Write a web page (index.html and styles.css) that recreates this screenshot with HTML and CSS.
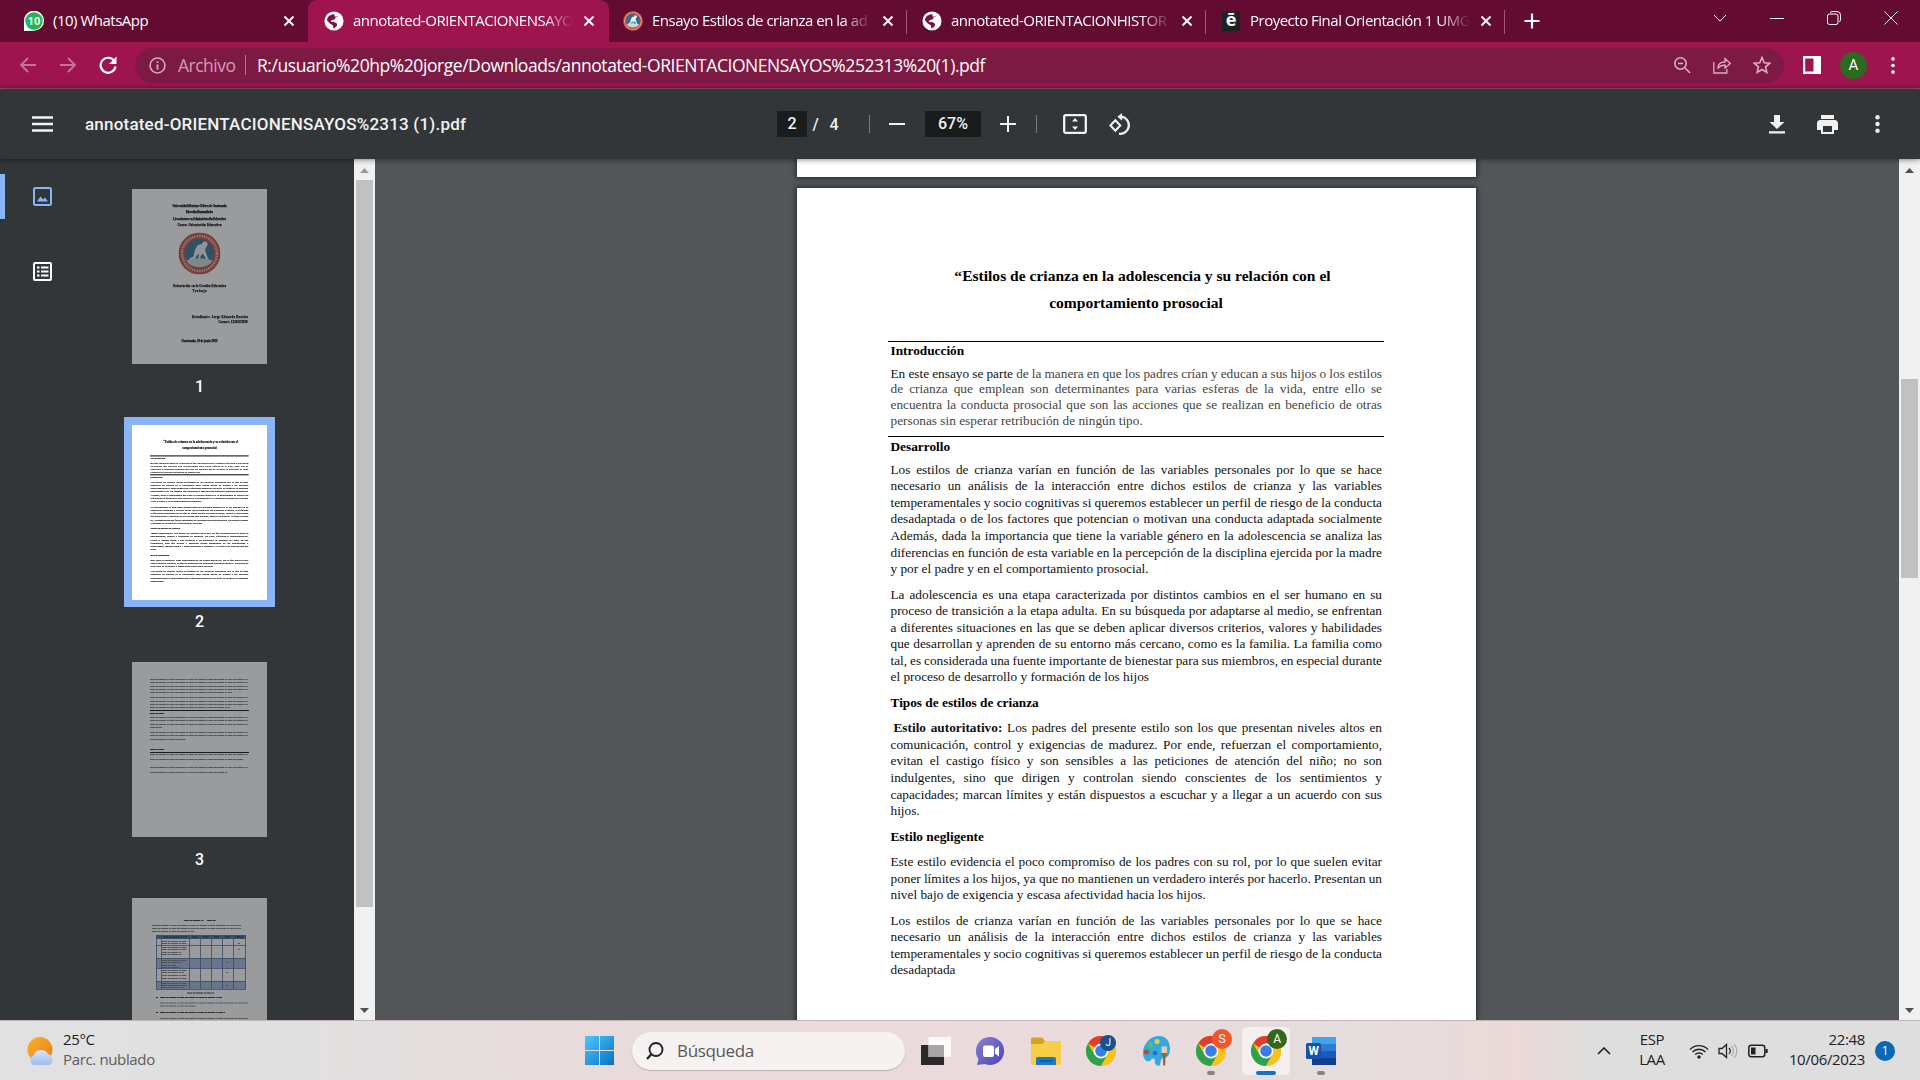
FILE: index.html
```html
<!DOCTYPE html>
<html lang="es">
	<head>
		<meta charset="utf-8">
		<title>annotated-ORIENTACIONENSAYOS%2313 (1).pdf</title>
		<link rel="stylesheet" href="styles.css">
	</head>
	<body>
		<!-- shared symbols -->
		<svg class="defs" width="0" height="0">
			<symbol id="close" viewBox="0 0 12 12"><path d="M1.5 1.5l9 9M10.5 1.5l-9 9" stroke="#fff" stroke-width="1.9"/></symbol>
			<symbol id="globe" viewBox="0 0 24 24"><circle cx="12" cy="12" r="11.5" fill="#fff"/><path d="M11 4c3-1 5 0 6 2l-3 1.500-1 2.500-4 1-1 2 5 .5 3 2-1 3-3.500 2.500c-1-1 0-3-1-4L7 15l-3.500-4C4 8 5 6 7.500 5z" fill="#7d1040"/><path d="M12 3c4 0 5 2 5 3l-4 1z" fill="#fff"/></symbol>
			<symbol id="seal" viewBox="0 0 42 42"><circle cx="21" cy="21" r="21" fill="#c6453c"/><circle cx="21" cy="21" r="17.500" fill="none" stroke="#e8c9b8" stroke-width="2.500" stroke-dasharray="1.300 1.100"/><circle cx="21" cy="21" r="14.500" fill="#2a6c96"/><path d="M8 28c8-3 18-3 26 0-4 9-22 9-26 0z" fill="#cfd5d8"/><path d="M23.500 11.500a2.800 2.800 0 1 1 4.500 2.500l-1.500 3 1.500 5 2 5h-2l-3-5-2 0-2 5-1-.5.5-5-2 1-1.500 3.500-6 1.500v-1.500l4-2 1.500-7 3-4.500z" fill="#eef2f3"/></symbol>
			<symbol id="chrome" viewBox="0 0 30 30"><circle cx="15" cy="15" r="15" fill="#fbc116"/><path d="M15 15L2 7.500A15 15 0 0 1 28 7.500H15z" fill="#e33b2e"/><path d="M2 7.500A15 15 0 0 0 15 30l6.500-11.300L15 15 8.500 18.700z" fill="#2da14b"/><path d="M28 7.500H15l6.500 11.200L15 30A15 15 0 0 0 28 7.500z" fill="#fbc116"/><circle cx="15" cy="15" r="7.400" fill="#fff"/><circle cx="15" cy="15" r="5.800" fill="#3b7de8"/></symbol>
		</svg>

		<div class="tabs">
			<div class="tab">
				<svg class="fav" viewBox="0 0 20 20"><path d="M0 20V10a10 10 0 1 1 10 9.700z" fill="#fff"/><circle cx="10" cy="10" r="8.700" fill="#1fb855"/><text x="10" y="14" class="fav-num">10</text></svg>
				<span class="tab-name">(10) WhatsApp</span>
				<svg class="x"><use href="#close"/></svg>
			</div>
			<div class="tab active">
				<svg class="fav"><use href="#globe"/></svg>
				<span class="tab-name fade">annotated-ORIENTACIONENSAYO</span>
				<svg class="x"><use href="#close"/></svg>
			</div>
			<div class="tab">
				<svg class="fav"><use href="#seal"/></svg>
				<span class="tab-name fade">Ensayo Estilos de crianza en la ad</span>
				<svg class="x"><use href="#close"/></svg>
			</div>
			<div class="tab line">
				<svg class="fav"><use href="#globe"/></svg>
				<span class="tab-name fade">annotated-ORIENTACIONHISTOR</span>
				<svg class="x"><use href="#close"/></svg>
			</div>
			<div class="tab line">
				<span class="fav e-icon">ē</span>
				<span class="tab-name fade">Proyecto Final Orientación 1 UMG</span>
				<svg class="x"><use href="#close"/></svg>
			</div>
			<div class="new-tab"><svg width="16" height="16" viewBox="0 0 16 16"><path d="M8 .5v15M.5 8h15" stroke="#fff" stroke-width="2.200"/></svg></div>
			<div class="win-btns">
				<svg viewBox="0 0 14 14"><path d="M1 4l6 6 6-6"/></svg>
				<svg viewBox="0 0 14 14"><path d="M0 7.500h14"/></svg>
				<svg viewBox="0 0 14 14"><rect x=".5" y="3" width="10.500" height="10.500" rx="2"/><path d="M3 1.500Q4 .5 6 .5h4q3.500 0 3.500 3.500v4q0 2-1 3"/></svg>
				<svg viewBox="0 0 14 14"><path d="M.5 .5l13 13M13.500.5l-13 13"/></svg>
			</div>
		</div>

		<div class="nav">
			<div class="nav-btns">
				<svg viewBox="0 0 18 18"><path d="M17 9H2M9 2L2 9l7 7" fill="none" stroke="#c8729a" stroke-width="1.800"/></svg>
				<svg viewBox="0 0 18 18"><path d="M1 9h15M9 2l7 7-7 7" fill="none" stroke="#c8729a" stroke-width="1.800"/></svg>
				<svg viewBox="0 0 18 18"><path d="M15.300 5A7.500 7.500 0 1 0 16.500 10.500" fill="none" stroke="#fff" stroke-width="2.200"/><path d="M17.500.5v7.500H10z" fill="#fff"/></svg>
			</div>
			<div class="omnibox">
				<svg class="info" viewBox="0 0 16 16"><circle cx="8" cy="8" r="7" fill="none" stroke="#d8a9bd" stroke-width="1.500"/><path d="M8 7v5M8 4v1.700" stroke="#d8a9bd" stroke-width="1.700"/></svg>
				<span class="scheme">Archivo</span>
				<span class="url">R:/usuario%20hp%20jorge/Downloads/annotated-ORIENTACIONENSAYOS%252313%20(1).pdf</span>
				<div class="omni-icons">
					<svg viewBox="0 0 18 18"><circle cx="7.500" cy="7.500" r="5.700"/><path d="M12 12l5 5M5 7.500h5"/></svg>
					<svg viewBox="0 0 18 18"><path d="M.8 6v11h13v-4M5 12c0-4 3-6 7-6V2.500L17.300 7.500 12 12V9c-3 0-5 1-7 3z" stroke-width="1.300"/></svg>
					<svg viewBox="0 0 18 18"><path d="M9 1.500l2.200 5.200 5.600.5-4.200 3.700 1.200 5.500L9 13.500l-4.800 2.900 1.200-5.500L1.200 7.200l5.600-.5z"/></svg>
				</div>
			</div>
			<svg class="panel" viewBox="0 0 18 18"><path d="M0 0h18v18H0zM2.200 2.500v13h8.300v-13z" fill="#fff" fill-rule="evenodd"/></svg>
			<span class="avatar">A</span>
			<svg class="dots" viewBox="0 0 4 18"><g fill="#fff"><circle cx="2" cy="2" r="1.900"/><circle cx="2" cy="9" r="1.900"/><circle cx="2" cy="16" r="1.900"/></g></svg>
		</div>

		<div class="pdf-bar">
			<svg class="burger" viewBox="0 0 21 16"><path d="M0 1.500h21M0 8h21M0 14.500h21" stroke="#f1f1f1" stroke-width="2.500"/></svg>
			<span class="pdf-name">annotated-ORIENTACIONENSAYOS%2313 (1).pdf</span>
			<div class="pdf-mid">
				<span class="page-in">2</span>
				<span class="slash">/</span>
				<span class="total">4</span>
				<i class="sep"></i>
				<svg class="minus" viewBox="0 0 16 16"><path d="M0 8h16" stroke="#f1f1f1" stroke-width="2"/></svg>
				<span class="zoom">67%</span>
				<svg class="plus" viewBox="0 0 16 16"><path d="M0 8h16M8 0v16" stroke="#f1f1f1" stroke-width="2"/></svg>
				<i class="sep"></i>
				<svg class="fit" viewBox="0 0 24 20"><rect x="1.200" y="1.200" width="21.600" height="17.600" rx="1.500" fill="none" stroke="#f1f1f1" stroke-width="2.300"/><path d="M12 4l3 3.500H9zM12 16l3-3.500H9z" fill="#f1f1f1"/></svg>
				<svg class="rot" viewBox="0 0 22 22"><path d="M7 7l4.700 5L7 17l-4.700-5z" fill="none" stroke="#f1f1f1" stroke-width="2"/><path d="M13 3.500a8 8 0 1 1-2.500 16.300" fill="none" stroke="#f1f1f1" stroke-width="2.200"/><path d="M13.500 0v7.500L9 3.700z" fill="#f1f1f1"/></svg>
			</div>
			<div class="pdf-right">
				<svg width="16" height="19" viewBox="0 0 16 19"><path d="M5 0h6v7h4.500L8 14 .5 7H5zM0 16.300h16v2.200H0z"/></svg>
				<svg width="21" height="19" viewBox="0 0 21 19"><path d="M4 0h13v4H4zM3.500 5h14A3.500 3.500 0 0 1 21 8.500V15h-4v4H4v-4H0V8.500A3.500 3.500 0 0 1 3.500 5zM6 11v6h9v-6z" fill-rule="evenodd"/></svg>
				<svg width="5" height="18" viewBox="0 0 5 18"><circle cx="2.500" cy="2.300" r="2.200"/><circle cx="2.500" cy="9" r="2.200"/><circle cx="2.500" cy="15.700" r="2.200"/></svg>
			</div>
		</div>

		<div class="body">
			<div class="side">
				<div class="side-icons">
					<div class="side-icon on"><svg viewBox="0 0 19 19"><rect x="1" y="1" width="17" height="17" rx="1.500" fill="none" stroke="#8ab4f8" stroke-width="2"/><path d="M4 14.500l3.500-5 2.500 3 2-2 3 4z" fill="#8ab4f8"/></svg></div>
					<div class="side-icon"><svg viewBox="0 0 19 19"><rect x="1" y="1" width="17" height="17" rx="1" fill="none" stroke="#fff" stroke-width="2"/><path d="M4 5.500h2.500M8 5.500h7.500M4 9.500h2.500M8 9.500h7.500M4 13.500h2.500M8 13.500h7.500" stroke="#fff" stroke-width="2"/></svg></div>
				</div>
				<div class="thumbs">
					<div class="thumb">
						<svg viewBox="0 0 135 175">
							<g class="mini">
								<text x="67.500" y="18" textLength="54">Universidad Mariano Gálvez de Guatemala</text>
								<text x="67.500" y="24" textLength="27">Dirección Humanidades</text>
								<text x="67.500" y="31" textLength="53">Licenciatura en Administración Educativa</text>
								<text x="67.500" y="37" textLength="44">Curso: Orientación Educativa</text>
								<text x="67.500" y="98" textLength="53">Orientación en la Gestión Educativa</text>
								<text x="67.500" y="103" textLength="14">Trabajo</text>
								<text x="88" y="129" textLength="56">Estudiante: Jorge Eduardo Barrios</text>
								<text x="101" y="134" textLength="29">Carnet: 1234567890</text>
								<text x="67.500" y="153" textLength="36">Guatemala, 10 de junio 2023</text>
							</g>
							<use href="#seal" x="46.500" y="43.500" width="42" height="42"/>
						</svg>
					</div>
					<div class="num">1</div>
					<div class="thumb sel"><div class="mini-page" id="mini"></div></div>
					<div class="num n2">2</div>
					<div class="thumb">
						<svg viewBox="0 0 135 175">
							<g class="bars">
								<path d="M18 17.500h98M18 20.500h98M18 24.500h98M18 27.500h98M18 30.500h82M18 35.500h98M18 39.500h98M18 42.500h98M18 45.500h80"/>
								<path d="M18 51.500h14" class="dark"/>
								<path d="M18 55.500h98M18 58.500h98M18 62.500h98M18 65.500h12M18 70.500h98M18 73.500h98M18 77.500h36"/>
								<path d="M18 87.500h14" class="dark"/>
								<path d="M18 92.500h98M18 97.500h93M18 105.500h98M18 110.500h78"/>
							</g>
							<path d="M18 48.500h99M18 90.500h99" stroke="#000"/>
						</svg>
					</div>
					<div class="num">3</div>
					<div class="thumb">
						<svg viewBox="0 0 135 175">
							<path d="M52 22.500h20M75 22.500h9" class="bars dark"/>
							<g class="bars"><path d="M20 27.500h89M20 30.500h89M20 33.500h42"/></g>
							<path d="M24 37h90v4H24z" fill="#3f68aa"/>
							<path d="M24 60h90v10H24zM24 83h90v8H24z" fill="#9fb4da"/>
							<path d="M24.500 37v54M29.500 37v54M57.500 37v54M68.500 37v54M79.500 37v54M90.500 37v54M101.500 37v54M113.500 37v54M24 47.500h90M24 60.500h90M24 70.500h90M24 83.500h90M24 91.500h90" stroke="#42629c" stroke-width=".8"/>
							<path d="M31 39h24M60 39h6M71 39h6M82 39h5M93 39h5M103 39h8" class="bars dark"/>
							<g class="bars"><path d="M30 43.500h25M30 45.500h25M30 49.500h25M30 51.500h25M30 54.500h20M30 56.500h20M30 62.500h25M30 64.500h20M30 67.500h14M30 69.500h18M30 72.500h25M30 74.500h22M30 77.500h25M30 80.500h25M30 85.500h25M30 87.500h25M30 89.500h22M106 45.500h2M106 51.500h2M94 64.500h2M94 74.500h2M94 87.500h2"/></g>
							<path d="M55 95h27M24 99.500h2M28 99.500h62M24 114.500h2M28 114.500h65" class="bars dark"/>
							<g class="bars"><path d="M28 105h88M28 108h36M28 120.500h88"/></g>
						</svg>
					</div>
				</div>
				<div class="scroll">
					<svg viewBox="0 0 9 5"><path d="M0 5L4.500 0 9 5z" fill="#9a9a9a"/></svg>
					<div class="bar side-bar"></div>
					<svg class="down" viewBox="0 0 9 5"><path d="M0 0l4.500 5L9 0z" fill="#505050"/></svg>
				</div>
			</div>

			<div class="viewer">
				<div class="page prev"></div>
				<div class="page" id="page">
					<h1><span class="shift">“Estilos de crianza en la adolescencia y su relación con el</span><br>comportamiento prosocial</h1>
					<div class="rule">
						<h2>Introducción</h2>
						<p class="intro"><b>En este ensayo se parte</b> de la manera en que los padres crían y educan a sus hijos o los estilos<br>de crianza que emplean son determinantes para varias esferas de la vida, entre ello se<br>encuentra la conducta prosocial que son las acciones que se realizan en beneficio de otras<span class="last">personas sin esperar retribución de ningún tipo.</span></p>
					</div>
					<div class="rule second">
						<h2>Desarrollo</h2>
						<p class="first">Los estilos de crianza varían en función de las variables personales por lo que se hace<br>necesario un análisis de la interacción entre dichos estilos de crianza y las variables<br>temperamentales y socio cognitivas si queremos establecer un perfil de riesgo de la conducta<br>desadaptada o de los factores que potencian o motivan una conducta adaptada socialmente<br>Además, dada la importancia que tiene la variable género en la adolescencia se analiza las<br>diferencias en función de esta variable en la percepción de la disciplina ejercida por la madre<span class="last">y por el padre y en el comportamiento prosocial.</span></p>
						<p>La adolescencia es una etapa caracterizada por distintos cambios en el ser humano en su<br>proceso de transición a la etapa adulta. En su búsqueda por adaptarse al medio, se enfrentan<br>a diferentes situaciones en las que se deben aplicar diversos criterios, valores y habilidades<br>que desarrollan y aprenden de su entorno más cercano, como es la familia. La familia como<br>tal, es considerada una fuente importante de bienestar para sus miembros, en especial durante<span class="last">el proceso de desarrollo y formación de los hijos</span></p>
						<h2 class="sub">Tipos de estilos de crianza</h2>
						<p><strong>Estilo autoritativo:</strong> Los padres del presente estilo son los que presentan niveles altos en<br>comunicación, control y exigencias de madurez. Por ende, refuerzan el comportamiento,<br>evitan el castigo físico y son sensibles a las peticiones de atención del niño; no son<br>indulgentes, sino que dirigen y controlan siendo conscientes de los sentimientos y<br>capacidades; marcan límites y están dispuestos a escuchar y a llegar a un acuerdo con sus<span class="last">hijos.</span></p>
						<h2 class="sub">Estilo negligente</h2>
						<p>Este estilo evidencia el poco compromiso de los padres con su rol, por lo que suelen evitar<br>poner límites a los hijos, ya que no mantienen un verdadero interés por hacerlo. Presentan un<span class="last">nivel bajo de exigencia y escasa afectividad hacia los hijos.</span></p>
						<p>Los estilos de crianza varían en función de las variables personales por lo que se hace<br>necesario un análisis de la interacción entre dichos estilos de crianza y las variables<br>temperamentales y socio cognitivas si queremos establecer un perfil de riesgo de la conducta<span class="last">desadaptada</span></p>
					</div>
				</div>
			</div>
			<div class="scroll">
				<svg viewBox="0 0 9 5"><path d="M0 5L4.500 0 9 5z" fill="#505050"/></svg>
				<div class="bar main-bar"></div>
				<svg class="down" viewBox="0 0 9 5"><path d="M0 0l4.500 5L9 0z" fill="#505050"/></svg>
			</div>
		</div>

		<div class="taskbar">
			<div class="weather">
				<svg viewBox="0 0 28 28"><defs><linearGradient id="sun" x1="0" y1="0" x2="1" y2="1"><stop offset="0" stop-color="#f6b42c"/><stop offset="1" stop-color="#ee7a16"/></linearGradient><linearGradient id="cloud" x1="0" y1="0" x2="0" y2="1"><stop offset="0" stop-color="#dbe7fb"/><stop offset="1" stop-color="#9dbdf0"/></linearGradient></defs><circle cx="13" cy="12.500" r="12.500" fill="url(#sun)"/><path d="M7 28a5 5 0 0 1-.5-9.500A8 8 0 0 1 21 17a6 6 0 0 1 1.500 11z" fill="url(#cloud)"/></svg>
				<div class="two"><div>25°C</div><div class="sky">Parc. nublado</div></div>
			</div>
			<div class="apps">
				<svg class="start" viewBox="0 0 29 29"><defs><linearGradient id="win" x1="0" y1="0" x2="1" y2="1"><stop offset="0" stop-color="#4cc8fb"/><stop offset="1" stop-color="#0a6fc6"/></linearGradient></defs><path d="M0 0h14v14H0zM15 0h14v14H15zM0 15h14v14H0zM15 15h14v14H15z" fill="url(#win)"/></svg>
				<div class="search"><svg viewBox="0 0 18 18"><circle cx="10" cy="7.500" r="6.500" fill="none" stroke="#222" stroke-width="1.900"/><path d="M5.500 12L1 17" stroke="#222" stroke-width="2.200"/></svg><span>Búsqueda</span></div>
				<div class="app"><svg viewBox="0 0 30 28"><path d="M0 8h23v20H0z" fill="#2b2929"/><path d="M7.500 0H30v20H7.500z" fill="#fff" fill-opacity=".85"/><path d="M7.500 8H23v12H7.500z" fill="#a7a5a5"/></svg></div>
				<div class="app"><svg viewBox="0 0 30 30"><defs><linearGradient id="chat" x1="0" y1="0" x2="1" y2="1"><stop offset="0" stop-color="#8b80d8"/><stop offset="1" stop-color="#4846b4"/></linearGradient></defs><path d="M15 1a14 14 0 1 1-6 27L1 29l1.500-6A14 14 0 0 1 15 1z" fill="url(#chat)"/><rect x="7" y="9.500" width="11" height="11.500" rx="2" fill="#fff"/><path d="M19 13l4-3v10.500l-4-3z" fill="#fff"/></svg></div>
				<div class="app"><svg viewBox="0 0 30 30"><path d="M0 3a1.500 1.500 0 0 1 1.500-1.500H11L14 5v5H0z" fill="#d9a11c"/><path d="M0 8h11l3-3h15a1 1 0 0 1 1 1v22a1 1 0 0 1-1 1H0z" fill="#f8ce49"/><path d="M5 29v-6a2 2 0 0 1 2-2h16a2 2 0 0 1 2 2v6z" fill="#1d78c6"/><path d="M9 25h12" stroke="#11569b" stroke-width="1.500"/></svg></div>
				<div class="app"><svg><use href="#chrome"/></svg><span class="who j">J</span></div>
				<div class="app"><svg viewBox="0 0 30 30"><path d="M18 0c7 0 11 5 11 13 0 6-3 9-6 9-4 0-3 4-4 7-2 2-6-1-5-4 0-3-3-3-4-1-2 3-8 1-8-7C2 8 9 0 18 0z" fill="#33a9dd"/><circle cx="9.500" cy="9" r="2.500" fill="#5bc06a"/><circle cx="16" cy="5.500" r="2.500" fill="#f5cf38"/><circle cx="5.500" cy="16" r="2.600" fill="#a9503e"/><circle cx="14" cy="17" r="2.300" fill="#1b79b5"/><path d="M20.500 10.500h5.500v7q-2.700 2-5.500 0z" fill="#dccdb7"/><path d="M20.500 17h5.500v2l-1.500 1-.3 9.500h-2L22 20l-1.500-1z" fill="#9a6131"/></svg></div>
				<div class="app"><svg><use href="#chrome"/></svg><span class="who s">S</span><i class="run"></i></div>
				<div class="app open"><svg><use href="#chrome"/></svg><span class="who a">A</span><i class="run wide"></i></div>
				<div class="app"><svg viewBox="0 0 30 30"><path d="M6 1h24v7H6z" fill="#41a5ee"/><path d="M6 8h24v7H6z" fill="#2b7cd3"/><path d="M6 15h24v7H6z" fill="#185abd"/><path d="M6 22h24v7H6z" fill="#103f91"/><rect y="7" width="15" height="16" rx="1.500" fill="#1651aa"/></svg><span class="w">W</span><i class="run"></i></div>
			</div>
			<div class="tray">
				<svg class="up" viewBox="0 0 14 8"><path d="M1 7l6-6 6 6" fill="none" stroke="#222" stroke-width="1.600"/></svg>
				<div class="lang two">ESP<br>LAA</div>
				<svg class="wifi" viewBox="0 0 20 16"><g fill="none" stroke="#222" stroke-width="1.400"><path d="M1 6.500a12.500 12.500 0 0 1 18 0M3.500 9a9 9 0 0 1 13 0M6.200 11.500a5.500 5.500 0 0 1 7.600 0"/></g><circle cx="10" cy="14" r="1.700" fill="#222"/></svg>
				<svg class="vol" viewBox="0 0 20 16"><path d="M1 5.500h3L8.500 1.500v13L4 10.500H1z" fill="none" stroke="#222" stroke-width="1.300"/><path d="M11 5a4.500 4.500 0 0 1 0 6" fill="none" stroke="#222" stroke-width="1.200"/><path d="M13.500 3a7.500 7.500 0 0 1 0 10M16 1a10 10 0 0 1 0 14" fill="none" stroke="#aaa" stroke-width="1.200"/></svg>
				<svg class="batt" viewBox="0 0 20 14"><rect x=".8" y="1.300" width="16" height="11.400" rx="2.500" fill="none" stroke="#222" stroke-width="1.500"/><path d="M3 3.500h4.500v7H3zM17.500 5h2.200v4h-2.200z" fill="#222"/></svg>
				<div class="clock two">22:48<br>10/06/2023</div>
				<span class="notif">1</span>
			</div>
		</div>

		<script type="text/javascript" src="script.js"></script>
	</body>
</html>
```
FILE: styles.css
```css
*{
	margin: 0;
	padding: 0;
	box-sizing: border-box;
}
body{
	width: 1920px;
	height: 1080px;
	overflow: hidden;
	display: flex;
	flex-direction: column;
	font-family: "Open Sans", "Noto Sans", sans-serif;
	background: #525659;
}
svg{
	display: block;
	flex: none;
}
.defs{
	position: absolute;
}

/* tabs */
.tabs{
	height: 42px;
	flex: none;
	display: flex;
	background: #640b32;
	padding-left: 9px;
}
.tab{
	width: 299px;
	height: 42px;
	display: flex;
	align-items: center;
	padding-left: 15px;
	color: #fff;
}
.tab + .tab{
	padding-left: 16px;
}
.tab.active{
	width: 301px;
	margin-right: -2px;
	background: #9e144f;
	border-radius: 9px 9px 0 0;
}
.tab.line{
	background: linear-gradient(#a4567a, #a4567a) 0 10px / 1px 24px no-repeat;
}
.fav{
	width: 20px;
	height: 20px;
	flex: none;
}
.fav-num{
	font: bold 11px Roboto, sans-serif;
	fill: #fff;
	text-anchor: middle;
}
.e-icon{
	background: #1e2322;
	color: #fff;
	font: bold 18px/17px "Open Sans", sans-serif;
	text-align: center;
	width: 18px;
	margin: 0 1px;
}
.tab-name{
	width: 220px;
	margin: 0 10px 0 9px;
	padding-bottom: 2px;
	font-size: 15px;
	letter-spacing: -0.5px;
	white-space: nowrap;
}
.fade{
	-webkit-mask-image: linear-gradient(90deg, #000 190px, transparent 220px);
	mask-image: linear-gradient(90deg, #000 190px, transparent 220px);
}
.x{
	width: 12px;
	height: 12px;
}
.new-tab{
	width: 56px;
	display: flex;
	align-items: center;
	padding-left: 20px;
	background: linear-gradient(#a4567a, #a4567a) 0 10px / 1px 24px no-repeat;
}
.win-btns{
	margin-left: auto;
	display: flex;
	gap: 43px;
	padding: 11px 22px 0 0;
}
.win-btns svg{
	width: 14px;
	height: 14px;
	fill: none;
	stroke: #fff;
	stroke-width: 1;
}

/* address bar */
.nav{
	height: 47px;
	flex: none;
	display: flex;
	align-items: center;
	background: #9e144f;
	border-bottom: 1px solid #a9587d;
}
.nav-btns{
	width: 135px;
	display: flex;
	gap: 22px;
	padding-left: 19px;
}
.nav-btns svg{
	width: 18px;
	height: 18px;
}
.omnibox{
	width: 1649px;
	height: 35px;
	border-radius: 18px;
	background: #7d1a43;
	display: flex;
	align-items: center;
	padding: 0 13px 0 14px;
}
.info{
	width: 17px;
	height: 17px;
	margin-right: 12px;
}
.scheme{
	width: 68px;
	border-right: 1px solid #b9728f;
	line-height: 20px;
	font-size: 17.5px;
	letter-spacing: -0.5px;
	color: #cf9db2;
}
.url{
	margin-left: 11px;
	font-size: 17.5px;
	letter-spacing: -0.44px;
	color: #fff;
	white-space: nowrap;
}
.omni-icons{
	margin-left: auto;
	display: flex;
	gap: 22px;
}
.omni-icons svg{
	width: 18px;
	height: 18px;
	fill: none;
	stroke: #dfaec2;
	stroke-width: 1.6;
}
.panel{
	width: 18px;
	height: 18px;
	margin-left: 19px;
}
.avatar{
	width: 27px;
	height: 27px;
	border-radius: 50%;
	background: #2c6b1f;
	color: #fff;
	font: 15px/27px Roboto, sans-serif;
	text-align: center;
	margin: 0 24px 0 19px;
}
.dots{
	width: 4px;
	height: 17px;
}

/* pdf toolbar */
.pdf-bar{
	height: 70px;
	flex: none;
	display: flex;
	align-items: center;
	background: #323639;
	color: #f1f1f1;
	padding-left: 32px;
	font: 500 17px Roboto, sans-serif;
	box-shadow: 0 0 6px rgba(0, 0, 0, .6);
	position: relative;
	z-index: 2;
}
.burger{
	width: 21px;
	height: 16px;
	margin-right: 32px;
}
.pdf-name{
	width: 692px;
	white-space: nowrap;
	letter-spacing: 0.2px;
}
.pdf-mid{
	display: flex;
	align-items: center;
	font-size: 16px;
}
.page-in{
	width: 30px;
	height: 26px;
	line-height: 26px;
	background: #191b1c;
	text-align: center;
}
.slash{
	width: 17px;
	text-align: center;
}
.total{
	width: 20px;
	text-align: center;
	margin-right: 25px;
}
.sep{
	width: 1px;
	height: 18px;
	background: #77797b;
}
.minus{
	width: 16px;
	margin: 0 20px 0 19px;
}
.zoom{
	width: 56px;
	height: 26px;
	line-height: 26px;
	background: #191b1c;
	text-align: center;
}
.plus{
	width: 16px;
	margin: 0 20px 0 19px;
}
.fit{
	width: 24px;
	height: 20px;
	margin: 0 21px 0 26px;
}
.rot{
	width: 23px;
	height: 23px;
}
.pdf-right{
	margin-left: auto;
	display: flex;
	align-items: center;
	fill: #f1f1f1;
	padding-right: 40px;
}
.pdf-right svg:nth-child(2){
	margin: 0 37px 0 32px;
}

/* sidebar */
.body{
	height: 861px;
	flex: none;
	display: flex;
	overflow: hidden;
}
.side{
	width: 375px;
	display: flex;
	background: #323639;
}
.side-icons{
	width: 124px;
	padding-top: 15px;
}
.side-icon{
	height: 45px;
	margin-bottom: 30px;
	display: flex;
	align-items: center;
	padding-left: 33px;
}
.side-icon.on{
	background: linear-gradient(#8ab4f8, #8ab4f8) 0 0 / 5px 45px no-repeat;
}
.side-icon svg{
	width: 19px;
	height: 19px;
}
.thumbs{
	width: 230px;
	padding-top: 22px;
}
.thumb{
	width: 151px;
	height: 191px;
	padding: 8px;
	overflow: hidden;
}
.thumb svg{
	width: 135px;
	height: 175px;
	background: #fff;
	opacity: .5;
}
.thumb.sel{
	background: #8ab4f8;
	height: 190px;
	padding-top: 8px;
}
.mini{
	font: bold 3px "Liberation Serif", serif;
	text-anchor: middle;
	stroke: #000;
	stroke-width: .25;
}
.bars{
	fill: none;
	stroke: #666;
	stroke-width: .9;
	stroke-dasharray: 5 .6 3 .5 7 .7 2 .6;
}
.dark{
	stroke: #111;
}
.num{
	width: 151px;
	height: 45px;
	text-align: center;
	color: #fff;
	font: 500 16px/29px Roboto, sans-serif;
}
.n2{
	height: 47px;
}
.mini-page{
	width: 135px;
	height: 175px;
	background: #fff;
	overflow: hidden;
}
.mini-page .page{
	transform: scale(.1988);
	transform-origin: 0 0;
	margin: 0;
	box-shadow: none;
	color: #000;
	-webkit-text-stroke: .7px #222;
}
.mini-page .rule{
	border-top-width: 5px;
	margin-bottom: -4px;
}

/* scrollbars */
.scroll{
	width: 21px;
	height: 861px;
	flex: none;
	background: #f1f1f1;
	display: flex;
	flex-direction: column;
	align-items: center;
	padding: 9px 0 7px;
}
.scroll svg{
	width: 9px;
	height: 5px;
}
.scroll .down{
	margin-top: auto;
}
.bar{
	width: 17px;
	background: #c1c1c1;
}
.side-bar{
	height: 727px;
	margin-top: 7px;
}
.main-bar{
	height: 199px;
	margin-top: 206px;
}

/* document */
.viewer{
	width: 1524px;
	background: #525659;
	overflow: hidden;
}
.page{
	width: 679px;
	height: 879px;
	margin: 0 0 0 422px;
	background: #fff;
	box-shadow: 0 0 5px 1px rgba(0, 0, 0, .55);
	padding: 74px 92px 0 91px;
	font: 13.3px/16.6px "Liberation Serif", serif;
	color: #111;
}
.page.prev{
	height: 18px;
	margin-bottom: 11px;
	padding: 0;
}
.page h1{
	font-size: 15.55px;
	line-height: 27px;
	text-align: center;
	white-space: nowrap;
	margin-bottom: 25px;
	color: #000;
}
.shift{
	padding-left: 13px;
}
.page h2{
	font-size: 13.3px;
	color: #000;
}
.page .sub{
	margin-top: 8.8px;
}
.rule{
	border-top: 1px solid #000;
	padding: 1px 2px 0 2.5px;
}
.second{
	padding-top: 2px;
}
.page p{
	margin-top: 8.8px;
	white-space: nowrap;
	word-spacing: -0.42px;
	text-align: justify;
	text-align-last: justify;
}
.page p.intro{
	margin: 6.3px 0 8.2px;
	line-height: 15.6px;
	color: #444;
}
.page p.first{
	margin-top: 5.5px;
}
.intro b{
	font-weight: normal;
	color: #111;
}
.page strong{
	padding-left: 3px;
}
.last{
	display: block;
	word-spacing: 0;
	text-align-last: left;
}

/* taskbar */
.taskbar{
	height: 60px;
	flex: none;
	display: flex;
	align-items: center;
	background: linear-gradient(90deg, #e1e1e1 0, #e1e0e0 300px, #e9dbdc 600px, #ebdadb 1000px, #e5dddd 1350px, #ecd9d9 1520px, #dedede 1600px, #dedede 100%);
	border-top: 1px solid #bdb5b6;
	color: #222;
	font-size: 15px;
	line-height: 20px;
	letter-spacing: -0.35px;
}
.two{
	padding-bottom: 4px;
}
.weather{
	width: 585px;
	display: flex;
	align-items: center;
	padding-left: 27px;
	gap: 8px;
}
.weather svg{
	width: 28px;
	height: 28px;
}
.sky{
	color: #5c5c5c;
}
.apps{
	display: flex;
	align-items: center;
}
.start{
	width: 29px;
	height: 29px;
}
.search{
	width: 273px;
	height: 38px;
	margin: 0 7px 0 18px;
	border-radius: 19px;
	background: #f7f2f2;
	box-shadow: 0 1px 1px #bcaeb0;
	display: flex;
	align-items: center;
	padding-left: 14px;
	gap: 13px;
	font-size: 17px;
	color: #5a5757;
}
.search svg{
	width: 18px;
	height: 18px;
}
.app{
	width: 48px;
	height: 48px;
	margin-right: 7px;
	border-radius: 5px;
	position: relative;
	display: flex;
	align-items: center;
	justify-content: center;
}
.app svg{
	width: 30px;
	height: 30px;
}
.open{
	background: #f6eff0;
}
.who{
	position: absolute;
	top: 2px;
	right: 3px;
	width: 20px;
	height: 20px;
	border-radius: 50%;
	color: #fff;
	font: 12px/20px Roboto, sans-serif;
	text-align: center;
}
.j{
	top: 8px;
	right: 9px;
	width: 16px;
	height: 16px;
	line-height: 16px;
	font-size: 10px;
	background: #15528f;
}
.s{
	background: #f0562a;
}
.a{
	background: #32691f;
}
.w{
	position: absolute;
	left: 9px;
	top: 14px;
	width: 15px;
	color: #fff;
	font: bold 12px/20px Roboto, sans-serif;
	text-align: center;
}
.run{
	position: absolute;
	bottom: 0;
	left: 20px;
	width: 8px;
	height: 4px;
	border-radius: 2px;
	background: #8d8183;
}
.wide{
	left: 14px;
	width: 20px;
	background: #1374c5;
}
.tray{
	margin-left: auto;
	display: flex;
	align-items: center;
	padding-right: 25px;
}
.up{
	width: 14px;
	height: 8px;
	margin-right: 27px;
}
.lang{
	text-align: center;
	width: 28px;
	margin-right: 23px;
}
.wifi{
	width: 20px;
	height: 16px;
	margin-right: 9px;
}
.vol{
	width: 20px;
	height: 16px;
	margin-right: 10px;
}
.batt{
	width: 20px;
	height: 14px;
	margin-right: -1px;
}
.clock{
	width: 98px;
	text-align: right;
}
.notif{
	width: 20px;
	height: 20px;
	margin-left: 10px;
	border-radius: 50%;
	background: #0b68b4;
	color: #fff;
	font-size: 12px;
	text-align: center;
}
```
FILE: script.js
```js
//miniatura de la página 2: copia reducida de la página
var mini = document.getElementById('mini');
var copy = document.getElementById('page').cloneNode(true);
copy.removeAttribute('id');
mini.appendChild(copy);
```
